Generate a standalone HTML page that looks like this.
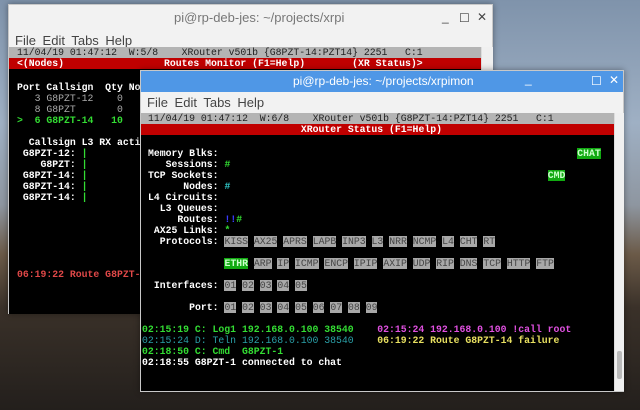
<!DOCTYPE html>
<html><head><meta charset="utf-8"><style>
*{margin:0;padding:0;box-sizing:border-box}
body{width:640px;height:410px;overflow:hidden;position:relative;font-family:"Liberation Sans",sans-serif;
background:linear-gradient(180deg,#7f93ab 0%,#9fb0c4 30%,#8e96a0 50%,#6b5a48 62%,#3a3129 75%,#231f1c 100%);}
.win{position:absolute;background:#f2f2f2;border:1px solid #c8c8c8;box-shadow:0 0 6px rgba(0,0,0,.4)}
.title{position:absolute;left:0;right:0;top:0;font-size:12.5px;color:#777;}
.menu{position:absolute;left:6px;font-size:13px;color:#444;word-spacing:3px}
.term{position:absolute;background:#000;overflow:hidden}
.l{position:absolute;left:0;white-space:pre;font-family:"Liberation Mono",monospace;font-weight:bold;font-size:9.8px;line-height:11px;color:#fff}
.st{background:#b4b4b4;color:#222;font-weight:normal;height:12px}
.rd{background:#c00000;color:#fff}
.g{color:#33dd33}.c{color:#30c8c8}.b{color:#3a3aff}.gr{color:#aaa;font-weight:normal}
.bx{background:#a8a8a8;color:#444;font-weight:normal}
.gb{background:#11aa11;color:#cfc}
.sb{position:absolute;background:#f0f0f0;border-left:1px solid #ddd}
.ctl{position:absolute;font-size:12px}
</style></head><body>

<!-- back window -->
<div class="win" style="left:8px;top:4px;width:485px;height:310px;">
  <div class="title" style="height:26px;background:#f2f2f2;"><span style="position:absolute;left:165px;top:5px;font-size:13px">pi@rp-deb-jes: ~/projects/xrpi</span>
  <span class="ctl" style="left:433px;top:5px;color:#444">_</span><span class="ctl" style="left:450px;top:6px;color:#444">☐</span><span class="ctl" style="left:468px;top:5px;color:#444">✕</span></div>
  <div class="menu" style="top:28px">File Edit Tabs Help</div>
  <div class="term" style="left:0;top:42px;width:472px;height:267px;">
    <div class="l st" style="top:0;width:472px;padding-left:8px">11/04/19 01:47:12  W:5/8    XRouter v501b {G8PZT-14:PZT14} 2251   C:1</div>
    <div class="l rd" style="top:11px;width:472px;padding-left:8px">&lt;(Nodes)                 Routes Monitor (F1=Help)        (XR Status)&gt;</div>
    <div class="l" style="top:35px;left:8px">Port Callsign  Qty No</div>
    <div class="l gr" style="top:46px;left:8px">   3 G8PZT-12    0</div>
    <div class="l gr" style="top:57px;left:8px">   8 G8PZT       0</div>
    <div class="l g" style="top:68px;left:8px">&gt;  6 G8PZT-14   10</div>
    <div class="l" style="top:90px;left:8px">  Callsign L3 RX acti</div>
    <div class="l" style="top:101px;left:8px"> G8PZT-12: <span class="g">|</span></div>
    <div class="l" style="top:112px;left:8px">    G8PZT: <span class="g">|</span></div>
    <div class="l" style="top:123px;left:8px"> G8PZT-14: <span class="g">|</span></div>
    <div class="l" style="top:134px;left:8px"> G8PZT-14: <span class="g">|</span></div>
    <div class="l" style="top:145px;left:8px"> G8PZT-14: <span class="g">|</span></div>
    <div class="l" style="top:222px;left:8px;color:#e04848">06:19:22 Route G8PZT-14 failure</div>
  </div>
  <div class="sb" style="left:472px;top:42px;width:12px;height:267px"></div>
</div>

<!-- front window -->
<div class="win" style="left:140px;top:70px;width:484px;height:322px;">
  <div class="title" style="height:21px;background:#4f97e6;color:#fff"><span style="position:absolute;left:152px;top:3px;font-size:12px">pi@rp-deb-jes: ~/projects/xrpimon</span>
  <span class="ctl" style="left:384px;top:1px">_</span><span class="ctl" style="left:450px;top:3px">☐</span><span class="ctl" style="left:468px;top:2px">✕</span></div>
  <div class="menu" style="top:24px">File Edit Tabs Help</div>
  <div class="term" style="left:0;top:42px;width:473px;height:278px;">
    <div class="l st" style="top:0;width:473px;padding-left:7px">11/04/19 01:47:12  W:6/8    XRouter v501b {G8PZT-14:PZT14} 2251   C:1</div>
    <div class="l rd" style="top:11px;width:473px;padding-left:7px">                          XRouter Status (F1=Help)</div>
    <div class="l" style="top:35px;left:7px">Memory Blks:                                                             <span class="gb">CHAT</span></div>
    <div class="l" style="top:46px;left:7px">   Sessions: <span class="g">#</span></div>
    <div class="l" style="top:57px;left:7px">TCP Sockets:                                                        <span class="gb">CMD</span></div>
    <div class="l" style="top:68px;left:7px">      Nodes: <span class="c">#</span></div>
    <div class="l" style="top:79px;left:7px">L4 Circuits:</div>
    <div class="l" style="top:90px;left:7px">  L3 Queues:</div>
    <div class="l" style="top:101px;left:7px">     Routes: <span class="b">!!</span><span class="g">#</span></div>
    <div class="l" style="top:112px;left:7px"> AX25 Links: <span class="g">*</span></div>
    <div class="l" style="top:123px;left:7px">  Protocols: <span class="bx">KISS</span> <span class="bx">AX25</span> <span class="bx">APRS</span> <span class="bx">LAPB</span> <span class="bx">INP3</span> <span class="bx">L3</span> <span class="bx">NRR</span> <span class="bx">NCMP</span> <span class="bx">L4</span> <span class="bx">CHT</span> <span class="bx">RT</span></div>
    <div class="l" style="top:145px;left:7px">             <span class="gb">ETHR</span> <span class="bx">ARP</span> <span class="bx">IP</span> <span class="bx">ICMP</span> <span class="bx">ENCP</span> <span class="bx">IPIP</span> <span class="bx">AXIP</span> <span class="bx">UDP</span> <span class="bx">RIP</span> <span class="bx">DNS</span> <span class="bx">TCP</span> <span class="bx">HTTP</span> <span class="bx">FTP</span></div>
    <div class="l" style="top:167px;left:7px"> Interfaces: <span class="bx">01</span> <span class="bx">02</span> <span class="bx">03</span> <span class="bx">04</span> <span class="bx">05</span></div>
    <div class="l" style="top:189px;left:7px">       Port: <span class="bx">01</span> <span class="bx">02</span> <span class="bx">03</span> <span class="bx">04</span> <span class="bx">05</span> <span class="bx">06</span> <span class="bx">07</span> <span class="bx">08</span> <span class="bx">09</span></div>
    <div class="l" style="top:211px;left:1px"><span class="g">02:15:19 C: Log1 192.168.0.100 38540</span>    <span style="color:#e050e0">02:15:24 192.168.0.100 !call root</span></div>
    <div class="l" style="top:222px;left:1px"><span style="color:#2aa0a8;font-weight:normal">02:15:24 D: Teln 192.168.0.100 38540</span>    <span style="color:#e8e060">06:19:22 Route G8PZT-14 failure</span></div>
    <div class="l g" style="top:233px;left:1px">02:18:50 C: Cmd  G8PZT-1</div>
    <div class="l" style="top:244px;left:1px">02:18:55 G8PZT-1 connected to chat</div>
  </div>
  <div class="sb" style="left:473px;top:42px;width:10px;height:278px"><div style="position:absolute;left:2px;bottom:12px;width:5px;height:28px;background:#bbb;border-radius:2px"></div></div>
</div>
</body></html>
